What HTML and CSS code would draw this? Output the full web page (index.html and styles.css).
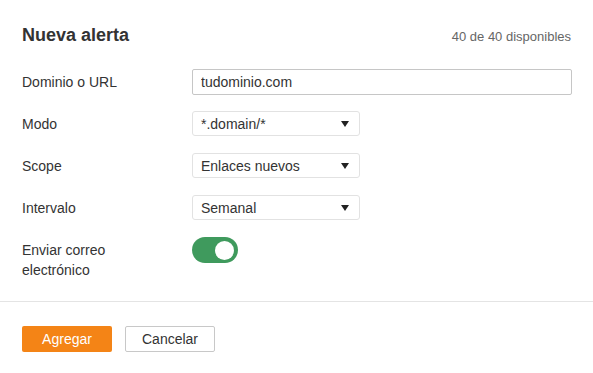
FILE: index.html
```html
<!DOCTYPE html>
<html lang="es">
<head>
  <meta charset="UTF-8" />
  <meta name="viewport" content="width=device-width, initial-scale=1.0" />
  <title>Nueva alerta</title>
  <link rel="stylesheet" href="styles.css">
</head>
<body>
  <div class="modal">
    <div class="modal-head">
      <h2>Nueva alerta</h2>
      <span class="quota">40 de 40 disponibles</span>
    </div>

    <form class="alert-form">
      <div class="row">
        <label class="label">Dominio o URL</label>
        <input type="text" class="text-input" value="tudominio.com" />
      </div>
      <div class="row">
        <label class="label">Modo</label>
        <div class="dropdown"><span>*.domain/*</span><span class="caret"></span></div>
      </div>
      <div class="row">
        <label class="label">Scope</label>
        <div class="dropdown"><span>Enlaces nuevos</span><span class="caret"></span></div>
      </div>
      <div class="row">
        <label class="label">Intervalo</label>
        <div class="dropdown"><span>Semanal</span><span class="caret"></span></div>
      </div>
      <div class="row row-top">
        <label class="label label-wrap">Enviar correo electrónico</label>
        <div class="toggle"><span class="knob"></span></div>
      </div>
    </form>

    <div class="modal-foot">
      <button class="btn btn-primary">Agregar</button>
      <button class="btn btn-plain">Cancelar</button>
    </div>
  </div>
</body>
</html>
```

FILE: styles.css
```css
* {
  margin: 0;
  padding: 0;
  box-sizing: border-box;
  font-family: 'Liberation Sans', Arial, sans-serif;
}
body {
  background-color: #fff;
  color: #333;
}
.modal {
  width: 593px;
  background: #fff;
}
.modal-head {
  display: flex;
  justify-content: space-between;
  align-items: baseline;
  padding: 25px 22px 0 22px;
  height: 69px;
}
.modal-head h2 {
  font-size: 18px;
  font-weight: 700;
  color: #333;
  line-height: 20px;
}
.quota {
  font-size: 13px;
  color: #666;
}
.alert-form {
  padding: 0 21px 0 22px;
  display: flex;
  flex-direction: column;
  gap: 17px;
}
.row {
  display: flex;
  align-items: center;
}
.row-top {
  align-items: flex-start;
}
.label {
  width: 170px;
  font-size: 14px;
  color: #333;
}
.label-wrap {
  width: 140px;
  margin-right: 30px;
  line-height: 20px;
  padding-top: 3px;
}
.text-input {
  flex: 1;
  height: 26px;
  border: 1px solid #c6c6c6;
  border-radius: 2px;
  padding: 0 8px;
  font-size: 14px;
  color: #333;
  margin-bottom: -1px;
}
.dropdown {
  width: 168px;
  height: 25px;
  border: 1px solid #e2e2e2;
  border-radius: 3px;
  display: flex;
  align-items: center;
  justify-content: space-between;
  padding: 0 8px 0 8px;
  font-size: 14px;
  color: #333;
}
.caret {
  width: 0;
  height: 0;
  border-left: 4px solid transparent;
  border-right: 4px solid transparent;
  border-top: 6px solid #222;
  margin-right: 2px;
}
.toggle {
  width: 46px;
  height: 26px;
  border-radius: 13px;
  background-color: #3f9a5d;
  display: flex;
  align-items: center;
  justify-content: flex-end;
  padding-right: 4px;
}
.knob {
  width: 19px;
  height: 19px;
  border-radius: 50%;
  background: #fff;
}
.modal-foot {
  margin-top: 21px;
  border-top: 1px solid #e4e4e4;
  padding: 24px 22px 0 22px;
  display: flex;
  gap: 13px;
}
.btn {
  width: 90px;
  height: 26px;
  font-size: 14px;
  border-radius: 2px;
  cursor: pointer;
}
.btn-primary {
  background-color: #f48416;
  color: #fff;
  border: none;
}
.btn-plain {
  background: #fff;
  color: #333;
  border: 1px solid #c8c8c8;
}
```
